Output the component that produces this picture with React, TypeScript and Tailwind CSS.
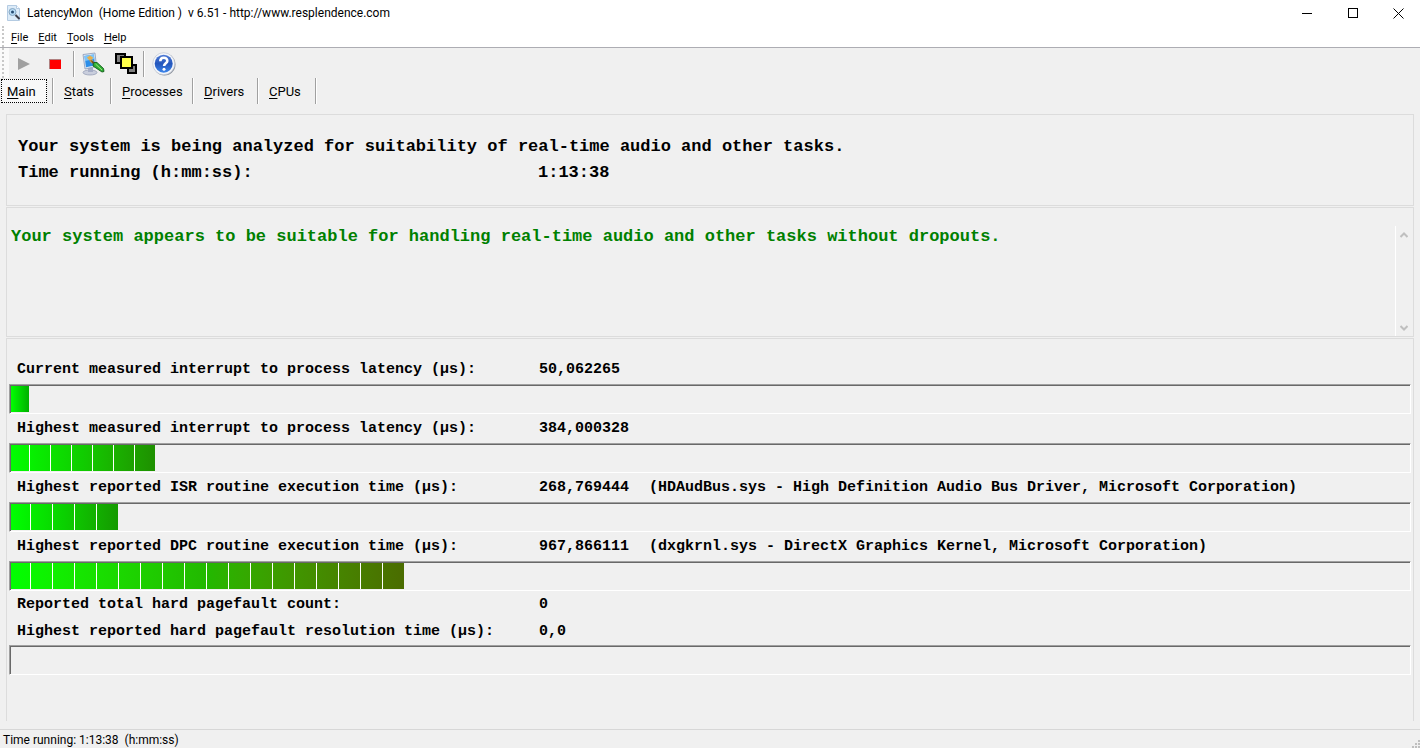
import { useState } from "react";

type Meter = {
  id: string;
  label: string;
  value: string;
  detail?: string;
  percent: number;
  segment: "narrow" | "wide";
  parts: number;
  fill: string;
};

const menus = ["File", "Edit", "Tools", "Help"];

const tabs = [
  { name: "Main", width: "w-[46px] mr-[5px]" },
  { name: "Stats", width: "w-[56px]" },
  { name: "Processes", width: "w-[80px]" },
  { name: "Drivers", width: "w-[63px]" },
  { name: "CPUs", width: "w-[56px]" },
];

const meters: Meter[] = [
  {
    id: "current",
    label: "Current measured interrupt to process latency (µs):",
    value: "50,062265",
    percent: 1.29,
    segment: "narrow",
    parts: 1,
    fill: "bg-linear-to-r from-[#00ff00] to-[#00b000]",
  },
  {
    id: "highest",
    label: "Highest measured interrupt to process latency (µs):",
    value: "384,000328",
    percent: 10.3,
    segment: "narrow",
    parts: 7,
    fill: "bg-linear-to-r from-[#00ff00] via-[#10cc00] to-[#1e9000]",
  },
  {
    id: "isr",
    label: "Highest reported ISR routine execution time (µs):",
    value: "268,769444",
    detail: "(HDAudBus.sys - High Definition Audio Bus Driver, Microsoft Corporation)",
    percent: 7.66,
    segment: "wide",
    parts: 5,
    fill: "bg-linear-to-r from-[#00ff00] via-[#0ad000] to-[#149a00]",
  },
  {
    id: "dpc",
    label: "Highest reported DPC routine execution time (µs):",
    value: "967,866111",
    detail: "(dxgkrnl.sys - DirectX Graphics Kernel, Microsoft Corporation)",
    percent: 28.12,
    segment: "wide",
    parts: 18,
    fill: "bg-linear-to-r from-[#00ff00] via-[#22b800] to-[#4a6c00]",
  },
];

function Hotkey({ text }: { text: string }) {
  return (
    <>
      <span className="underline underline-offset-2">{text[0]}</span>
      {text.slice(1)}
    </>
  );
}

function AppIcon() {
  return (
    <svg width="16" height="16" viewBox="0 0 16 16" aria-hidden="true">
      <path d="M1.5.5h9l3 3v12h-12z" fill="#dcebf8" stroke="#b4cbe2" />
      <path d="M10.500.5v3h3" fill="#fff" stroke="#b4cbe2" />
      <circle cx="6.500" cy="7" r="3.500" fill="#b9dcf5" stroke="#86a6c2" />
      <circle cx="6.500" cy="7" r="1.500" fill="#254a70" />
      <path d="M9.500 10l4 4" stroke="#3b3b45" strokeWidth="2" />
    </svg>
  );
}

function MonitorIcon() {
  return (
    <svg width="24" height="24" viewBox="0 0 24 24" aria-hidden="true">
      <ellipse cx="9" cy="20.500" rx="7" ry="2.500" fill="#c9cedd" stroke="#8e96b0" strokeWidth=".7" />
      <path d="M7 15l5 1v4H7z" fill="#a5adc6" />
      <path d="M2 2.500L14 1l1.500 13.500L4 17z" fill="#d9e4f2" stroke="#8a9ab8" strokeWidth=".8" />
      <path d="M3.500 4l9.300-1.400L14 13.300 5 15.200z" fill="#2c8ee8" />
      <path d="M3.500 4l9.300-1.400.5 4.400L4 9z" fill="#7cc4fa" />
      <path d="M6 5.500l3-2 3 2-1 2-3 .5z" fill="#e8b04a" />
      <path d="M8 8.500l3-1 2 3-2 1z" fill="#d39a3c" />
      <path d="M12.500 10.500l3.500 0 6.500 6 .5 3-2 .5-9-6z" fill="#2fae35" stroke="#125c1a" strokeWidth=".9" />
      <path d="M14.500 12l6.500 6" stroke="#9bea7d" />
      <path d="M9.500 8l3.500 2-1 2z" fill="#6b4a22" />
    </svg>
  );
}

function WindowsIcon() {
  return (
    <svg width="22" height="22" viewBox="0 0 22 22" shapeRendering="crispEdges" aria-hidden="true">
      <rect x="1" y="1" width="9" height="9" fill="#808080" stroke="#000" strokeWidth="2" />
      <rect x="13" y="12" width="8" height="8" fill="#808080" stroke="#000" strokeWidth="2" />
      <rect x="6" y="4" width="11" height="11" fill="#ffff4a" stroke="#000" strokeWidth="2" />
    </svg>
  );
}

function HelpIcon() {
  return (
    <svg width="24" height="24" viewBox="0 0 24 24" aria-hidden="true">
      <defs>
        <linearGradient id="ball" x1="0" y1="0" x2="0" y2="1">
          <stop offset="0" stopColor="#4f7bd6" />
          <stop offset=".5" stopColor="#2456bc" />
          <stop offset="1" stopColor="#3d86ea" />
        </linearGradient>
      </defs>
      <circle cx="12.500" cy="12.500" r="11" fill="#8f959f" />
      <circle cx="11.700" cy="11.700" r="11" fill="#f4f6fa" stroke="#b9c0cc" strokeWidth=".6" />
      <circle cx="11.700" cy="11.700" r="9" fill="url(#ball)" />
      <path
        d="M8.300 9.300c0-4.600 7-4.600 7-.4 0 2.300-3.200 2.400-3.200 5"
        fill="none"
        stroke="#fff"
        strokeWidth="2.600"
      />
      <circle cx="12" cy="17.200" r="1.500" fill="#fff" />
    </svg>
  );
}

function Grip() {
  return <span className="ml-[2px] w-0 self-stretch border-l-2 border-dotted border-[#c8c8c8]" />;
}

function Divider() {
  return <span className="h-[26px] w-[2px] border-l border-[#a0a0a0] bg-white" />;
}

function Track({ meter }: { meter?: Meter }) {
  return (
    <div className="mx-[2px] h-[30px] border border-t-[#a0a0a0] border-r-white border-b-white border-l-[#a0a0a0]">
      <div
        role="progressbar"
        aria-label={meter ? meter.label : "Highest reported hard pagefault resolution time"}
        aria-valuenow={meter ? meter.percent : 0}
        className="h-[28px] border-t border-l border-[#696969] pb-px"
      >
        {meter && (
          <div
            className={`flex h-full justify-end overflow-hidden ${meter.fill}`}
            style={{ width: `${meter.percent}%` }}
          >
            {Array.from({ length: meter.parts - 1 }, (_, i) => (
              <span
                key={i}
                className={
                  meter.segment === "wide"
                    ? "w-[22px] shrink-0 border-l border-white"
                    : "w-[21px] shrink-0 border-l border-white"
                }
              />
            ))}
          </div>
        )}
      </div>
    </div>
  );
}

export default function App() {
  const [activeTab, setActiveTab] = useState("Main");

  return (
    <div className="flex min-h-screen flex-col bg-[#f0f0f0] font-['Roboto',sans-serif] text-black">
      <header className="bg-white">
        <div className="flex h-[26px] items-center pl-[6px]">
          <AppIcon />
          <h1 className="ml-[5px] flex-1 text-[12px] whitespace-pre">
            {"LatencyMon  (Home Edition )  v 6.51 - http://www.resplendence.com"}
          </h1>
          <button aria-label="Minimize" className="flex h-[24px] w-[46px] items-center justify-center">
            <svg width="10" height="11" viewBox="0 0 10 11" shapeRendering="crispEdges">
              <path d="M0 5.500h10" stroke="#000" />
            </svg>
          </button>
          <button aria-label="Maximize" className="flex h-[24px] w-[46px] items-center justify-center">
            <svg width="11" height="11" viewBox="0 0 11 11" shapeRendering="crispEdges">
              <path d="M.5.5h9v9h-9z" fill="none" stroke="#000" />
            </svg>
          </button>
          <button aria-label="Close" className="flex h-[24px] w-[44px] items-center justify-center">
            <svg width="11" height="11" viewBox="0 0 11 11">
              <path d="M.5.5l10 10M10.500.5l-10 10" stroke="#000" />
            </svg>
          </button>
        </div>
        <nav className="flex h-[22px] items-center gap-[10px] border-b border-[#adadb3] text-[11px]">
          <Grip />
          {menus.map((menu) => (
            <button key={menu} className="pt-[4px] first-of-type:-ml-[3px]">
              <Hotkey text={menu} />
            </button>
          ))}
        </nav>
      </header>

      <div className="flex h-[30px] items-center">
        <div className="flex w-[9px] self-stretch bg-[#fafafa]">
          <Grip />
        </div>
        <div className="flex items-center pt-[2px]">
          <button aria-label="Start" className="ml-[9px]">
            <svg width="13" height="12" viewBox="0 0 13 12">
              <path d="M0 0l12 6-12 6z" fill="#a0a0a0" />
            </svg>
          </button>
          <button
            aria-label="Stop"
            className="mr-[12px] ml-[18px] h-[10px] w-[12px] border-t border-l border-[#b08080] bg-[#ff0000]"
          />
          <Divider />
          <button aria-label="Options" className="ml-[6px]">
            <MonitorIcon />
          </button>
          <button aria-label="Windows" className="mr-[6px] ml-[10px]">
            <WindowsIcon />
          </button>
          <Divider />
          <button aria-label="Help" className="ml-[7px]">
            <HelpIcon />
          </button>
        </div>
      </div>

      <div role="tablist" className="flex h-[26px] items-center pl-[1px] text-[13px]">
        {tabs.map((tab) => (
          <div key={tab.name} className="flex items-center">
            <button
              role="tab"
              aria-selected={tab.name === activeTab}
              onClick={() => setActiveTab(tab.name)}
              className={`h-[24px] pt-[2px] text-left ${tab.width} ${
                tab.name === activeTab ? "border border-dotted border-black bg-[#f8f8f8] pl-[5px]" : "pl-[10px]"
              }`}
            >
              <Hotkey text={tab.name} />
            </button>
            <Divider />
          </div>
        ))}
      </div>

      <main className="mx-[6px] mt-[10px] mb-[8px] flex flex-1 flex-col gap-px font-['Liberation_Mono',monospace] font-bold">
        <section className="border border-[#dcdcdc] px-[11px] pt-[19px] pb-[19px] text-[17px] leading-[26px]">
          <p>Your system is being analyzed for suitability of real-time audio and other tasks.</p>
          <p className="flex">
            <span className="w-[520px]">Time running (h:mm:ss):</span>
            <span>1:13:38</span>
          </p>
        </section>

        <section className="flex h-[130px] border border-[#dcdcdc] pt-[18px] pl-[4px]">
          <textarea
            readOnly
            aria-label="Conclusion"
            className="flex-1 resize-none overflow-hidden text-[17px] leading-[22px] text-[#008000] outline-none"
            value="Your system appears to be suitable for handling real-time audio and other tasks without dropouts."
          />
          <div className="flex w-[18px] flex-col items-center justify-between border-l border-white pt-[6px] pr-[2px] pb-[5px]">
            <svg width="8" height="6" viewBox="0 0 8 6">
              <path d="M.5 5L4 1.500 7.500 5" fill="none" stroke="#bfbfbf" strokeWidth="2" />
            </svg>
            <svg width="8" height="6" viewBox="0 0 8 6">
              <path d="M.5 1L4 4.500 7.500 1" fill="none" stroke="#bfbfbf" strokeWidth="2" />
            </svg>
          </div>
        </section>

        <section className="flex-1 border border-b-0 border-[#dcdcdc] pt-[16px] text-[15px]">
          {meters.map((meter) => (
            <div key={meter.id}>
              <p className="flex pl-[10px] leading-[29px]">
                <span className="w-[522px]">{meter.label}</span>
                <span className="w-[110px]">{meter.value}</span>
                {meter.detail && <span>{meter.detail}</span>}
              </p>
              <Track meter={meter} />
            </div>
          ))}
          <p className="flex pl-[10px] leading-[27px]">
            <span className="w-[522px]">Reported total hard pagefault count:</span>
            <span>0</span>
          </p>
          <p className="flex pl-[10px] leading-[27px]">
            <span className="w-[522px]">Highest reported hard pagefault resolution time (µs):</span>
            <span>0,0</span>
          </p>
          <Track />
        </section>
      </main>

      <footer className="flex h-[19px] items-center justify-between border-t border-[#d7d7d7] pl-[3px] text-[12px]">
        <span className="pt-px whitespace-pre">{"Time running: 1:13:38  (h:mm:ss)"}</span>
        <svg width="8" height="8" viewBox="0 0 8 8" className="self-end" fill="#bfbfbf" shapeRendering="crispEdges">
          <path d="M6 0h2v2H6zM3 3h2v2H3zM6 3h2v2H6zM0 6h2v2H0zM3 6h2v2H3zM6 6h2v2H6z" />
        </svg>
      </footer>
    </div>
  );
}
